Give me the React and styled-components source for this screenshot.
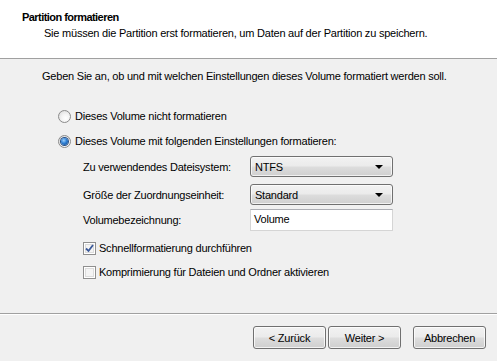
import React from 'react';
import styled, { createGlobalStyle } from 'styled-components';

const GlobalStyle = createGlobalStyle`
  html, body {
    margin: 0;
    padding: 0;
    background: #f0f0f0;
  }
  body {
    font-family: "Liberation Sans", Tahoma, Arial, sans-serif;
    font-size: 11px;
    letter-spacing: -0.22px;
    color: #000;
  }
`;

const Window = styled.div`
  width: 497px;
  height: 361px;
  display: flex;
  flex-direction: column;
  background: #f0f0f0;
  overflow: hidden;
`;

const Header = styled.div`
  height: 59px;
  background: #fff;
  border-bottom: 1px solid #a0a0a0;
  padding-top: 10px;
  box-sizing: border-box;
  display: flex;
  flex-direction: column;
  gap: 2px;
`;

const Title = styled.div`
  font-weight: bold;
  letter-spacing: -0.55px;
  line-height: 14px;
  padding-left: 22px;
`;

const Subtitle = styled.div`
  line-height: 14px;
  padding-left: 44px;
`;

const Main = styled.div`
  height: 254px;
  box-sizing: border-box;
  padding: 10px 0 0 42px;
  display: flex;
  flex-direction: column;
`;

const Intro = styled.div`
  line-height: 14px;
`;

const OptionRow = styled.div`
  display: flex;
  align-items: center;
  gap: ${p => p.$gap || 4}px;
  line-height: 14px;
  height: 14px;
  margin-top: ${p => p.$top}px;
  margin-left: ${p => p.$indent}px;
`;

const Radio = styled.span`
  width: 13px;
  height: 13px;
  box-sizing: border-box;
  border-radius: 50%;
  border: 1px solid #8b8b8b;
  background: radial-gradient(circle at 60% 65%, #ffffff 0%, #f4f4f4 40%, #d6d6d6 100%);
  display: flex;
  align-items: center;
  justify-content: center;
  flex-shrink: 0;

  &::after {
    content: '';
    display: ${p => (p.$checked ? 'block' : 'none')};
    width: 7px;
    height: 7px;
    border-radius: 50%;
    background: radial-gradient(circle at 40% 35%, #9fd2ff 0%, #2f80d4 45%, #0b3f85 100%);
    box-shadow: 0 0 0 1px #264f86;
  }
`;

const Checkbox = styled.span`
  width: 13px;
  height: 13px;
  box-sizing: border-box;
  border: 1px solid #8f8f8f;
  background: #f4f4f4;
  box-shadow: inset 0 0 0 1px #fff, inset 0 0 0 2px #dcdcdc;
  display: flex;
  align-items: center;
  justify-content: center;
  flex-shrink: 0;

  svg {
    display: block;
  }
`;

const FormRow = styled.div`
  display: flex;
  align-items: center;
  margin-left: 41px;
  margin-top: ${p => p.$top}px;
`;

const FieldLabel = styled.div`
  width: 167px;
  line-height: 14px;
`;

const Select = styled.div`
  width: 143px;
  height: 21px;
  box-sizing: border-box;
  border: 1px solid #707070;
  border-radius: 3px;
  background: linear-gradient(to bottom, #f2f2f2 0%, #ebebeb 48%, #dddddd 52%, #cfcfcf 100%);
  box-shadow: inset 0 0 0 1px rgba(255, 255, 255, 0.7);
  display: flex;
  align-items: center;
  justify-content: space-between;
  padding: 0 9px 0 4px;
  line-height: 14px;
`;

const Arrow = styled.span`
  width: 0;
  height: 0;
  border-left: 4px solid transparent;
  border-right: 4px solid transparent;
  border-top: 4px solid #000;
  margin-top: 1px;
`;

const TextInput = styled.div`
  width: 143px;
  height: 22px;
  box-sizing: border-box;
  border: 1px solid #d5d5d5;
  border-top-color: #abadb3;
  background: #fff;
  padding: 2px 3px 0;
  line-height: 14px;
`;

const Footer = styled.div`
  flex: 1;
  border-top: 1px solid #a0a0a0;
  box-shadow: inset 0 1px 0 #fff;
  padding: 12px 11px 0 0;
  display: flex;
  justify-content: flex-end;
  align-items: flex-start;
`;

const ButtonGroup = styled.div`
  display: flex;
  gap: 2px;
  margin-right: 12px;
`;

const Button = styled.div`
  width: 73px;
  height: 23px;
  box-sizing: border-box;
  border: 1px solid #707070;
  border-radius: 3px;
  background: linear-gradient(to bottom, #f2f2f2 0%, #ebebeb 48%, #dddddd 52%, #cfcfcf 100%);
  box-shadow: inset 0 0 0 1px rgba(255, 255, 255, 0.75);
  display: flex;
  align-items: center;
  justify-content: center;
  line-height: 14px;
`;

const Check = () => (
  <svg width="9" height="9" viewBox="0 0 9 9">
    <path d="M1 4.5 L3.5 7 L8 1" fill="none" stroke="#3c5a9a" strokeWidth="1.8" />
  </svg>
);

export default function App() {
  return (
    <>
      <GlobalStyle />
      <Window>
        <Header>
          <Title>Partition formatieren</Title>
          <Subtitle>Sie müssen die Partition erst formatieren, um Daten auf der Partition zu speichern.</Subtitle>
        </Header>
        <Main>
          <Intro>Geben Sie an, ob und mit welchen Einstellungen dieses Volume formatiert werden soll.</Intro>
          <OptionRow $top={26} $indent={16}>
            <Radio />
            <span>Dieses Volume nicht formatieren</span>
          </OptionRow>
          <OptionRow $top={11} $indent={16}>
            <Radio $checked />
            <span>Dieses Volume mit folgenden Einstellungen formatieren:</span>
          </OptionRow>
          <FormRow $top={8}>
            <FieldLabel>Zu verwendendes Dateisystem:</FieldLabel>
            <Select>
              <span>NTFS</span>
              <Arrow />
            </Select>
          </FormRow>
          <FormRow $top={7}>
            <FieldLabel>Größe der Zuordnungseinheit:</FieldLabel>
            <Select>
              <span>Standard</span>
              <Arrow />
            </Select>
          </FormRow>
          <FormRow $top={4}>
            <FieldLabel>Volumebezeichnung:</FieldLabel>
            <TextInput>Volume</TextInput>
          </FormRow>
          <OptionRow $top={10} $indent={41} $gap={3}>
            <Checkbox>
              <Check />
            </Checkbox>
            <span>Schnellformatierung durchführen</span>
          </OptionRow>
          <OptionRow $top={10} $indent={41} $gap={3}>
            <Checkbox />
            <span>Komprimierung für Dateien und Ordner aktivieren</span>
          </OptionRow>
        </Main>
        <Footer>
          <ButtonGroup>
            <Button>&lt; Zurück</Button>
            <Button>Weiter &gt;</Button>
          </ButtonGroup>
          <Button>Abbrechen</Button>
        </Footer>
      </Window>
    </>
  );
}
